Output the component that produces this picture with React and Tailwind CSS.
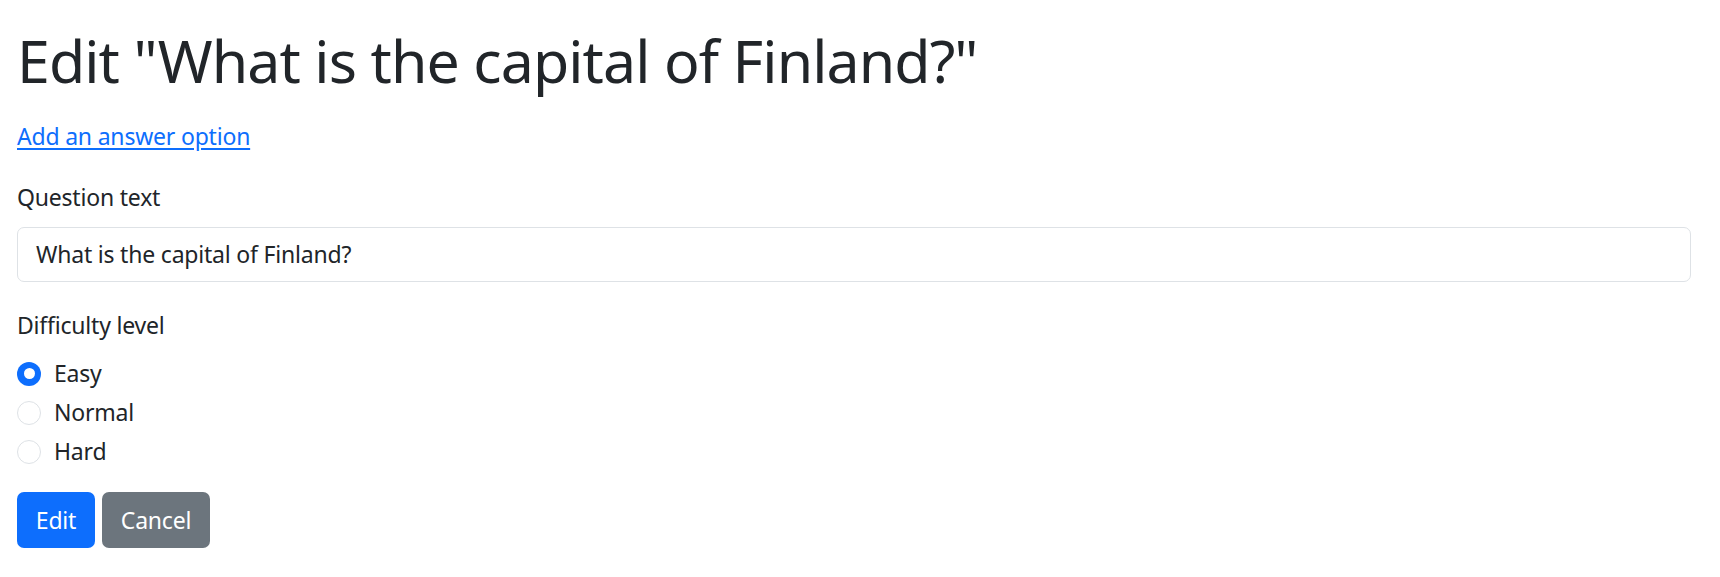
import React from "react";

function Radio({ label, checked }) {
  return (
    <label className="flex items-center h-[35px] mb-[4px] cursor-pointer">
      {checked ? (
        <span className="w-[24px] h-[24px] rounded-full bg-[#0d6efd] flex items-center justify-center shrink-0">
          <span className="w-[11px] h-[11px] rounded-full bg-white" />
        </span>
      ) : (
        <span className="w-[24px] h-[24px] rounded-full border border-[#dee2e6] bg-white shrink-0" />
      )}
      <span className="ml-[13px] text-[23px] leading-[35px] tracking-[-0.2px] text-[#212529]">{label}</span>
    </label>
  );
}

export default function App() {
  return (
    <div className="bg-white min-h-[577px] pl-[17px] pr-[29px] pt-[24px] font-['Noto_Sans',sans-serif] text-[#212529]">
      <h1 className="text-[59px] leading-[72px] font-normal tracking-[-0.9px] mb-[23px] text-[#212529]">
        Edit "What is the capital of Finland?"
      </h1>
      <a href="#" className="block w-max text-[23px] leading-[35px] tracking-[-0.2px] text-[#0d6efd] underline underline-offset-[3px]">
        Add an answer option
      </a>
      <div className="mt-[26px] text-[23px] leading-[35px] tracking-[-0.2px]">Question text</div>
      <div className="mt-[12px] h-[55px] border border-[#dee2e6] rounded-[7px] bg-white flex items-center pl-[18px] text-[23px] leading-[35px] tracking-[-0.2px]">
        What is the capital of Finland?
      </div>
      <div className="mt-[26px] text-[23px] leading-[35px] tracking-[-0.2px]">Difficulty level</div>
      <div className="mt-[13px]">
        <Radio label="Easy" checked />
        <Radio label="Normal" />
        <Radio label="Hard" />
      </div>
      <div className="mt-[23px] flex gap-[7px]">
        <button className="h-[56px] w-[78px] rounded-[7px] bg-[#0d6efd] text-white text-[23px] leading-[35px] tracking-[-0.2px]">Edit</button>
        <button className="h-[56px] w-[108px] rounded-[7px] bg-[#6c757d] text-white text-[23px] leading-[35px] tracking-[-0.2px]">Cancel</button>
      </div>
    </div>
  );
}
